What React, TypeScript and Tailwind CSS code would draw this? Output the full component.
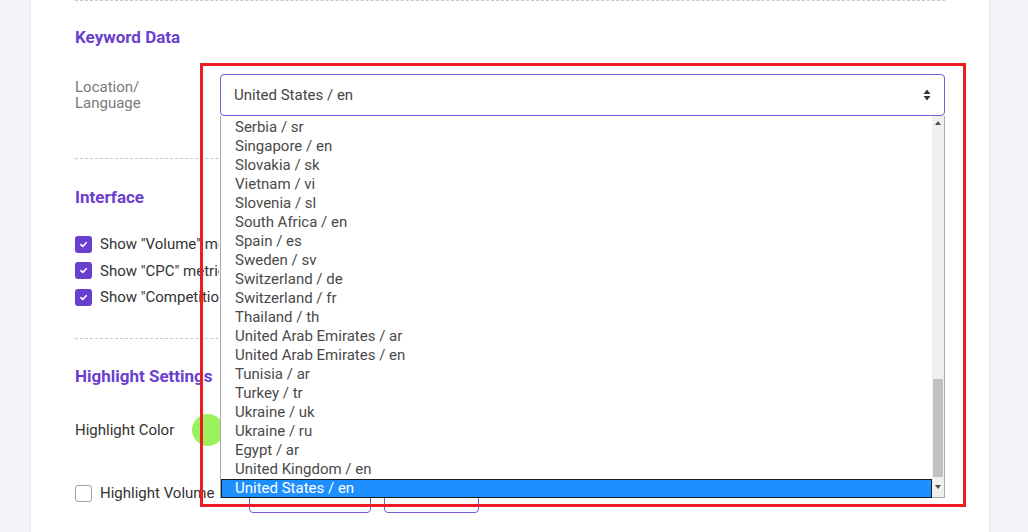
const options = [
  "Serbia / sr",
  "Singapore / en",
  "Slovakia / sk",
  "Vietnam / vi",
  "Slovenia / sl",
  "South Africa / en",
  "Spain / es",
  "Sweden / sv",
  "Switzerland / de",
  "Switzerland / fr",
  "Thailand / th",
  "United Arab Emirates / ar",
  "United Arab Emirates / en",
  "Tunisia / ar",
  "Turkey / tr",
  "Ukraine / uk",
  "Ukraine / ru",
  "Egypt / ar",
  "United Kingdom / en",
  "United States / en",
];

function Check({ checked }: { checked: boolean }) {
  if (!checked) {
    return <span className="h-[17px] w-[17px] shrink-0 rounded-[3px] border-[1.5px] border-[#9aa0a8] bg-white" />;
  }
  return (
    <span className="flex h-[17px] w-[17px] shrink-0 items-center justify-center rounded-[3px] bg-[#6a3fcf]">
      <svg viewBox="0 0 12 12" className="h-[9px] w-[9px]" fill="none" stroke="white" strokeWidth="2.2" strokeLinecap="round" strokeLinejoin="round">
        <path d="M2.5 6.3 5 8.6 9.6 3.6" />
      </svg>
    </span>
  );
}

function Dropdown() {
  return (
    <div className="absolute left-0 right-0 top-full flex h-[382px] border border-t-0 border-[#a9a9a9] bg-white">
      <ul className="flex-1 pt-[2px]">
        {options.map((o, i) =>
          i === options.length - 1 ? (
            <li key={o} className="h-[19px] border border-[#1c1c1c] bg-[#1e8fff] pl-[13px] text-[15px] leading-[17px] text-white">
              {o}
            </li>
          ) : (
            <li key={o} className="h-[19px] pl-[14px] text-[15px] leading-[19px] text-[#4a4a4a]">
              {o}
            </li>
          )
        )}
      </ul>
      <div className="flex w-[12px] flex-col bg-[#f0f0f0]">
        <div className="flex h-[14px] items-center justify-center">
          <svg viewBox="0 0 6 4" className="h-[4px] w-[6px]"><path d="M3 0 6 4H0z" fill="#505050" /></svg>
        </div>
        <div className="flex-1" />
        <div className="mx-[1px] h-[98px] bg-[#c1c1c1]" />
        <div className="flex h-[20px] items-center justify-center">
          <svg viewBox="0 0 6 4" className="h-[4px] w-[6px]"><path d="M0 0h6L3 4z" fill="#505050" /></svg>
        </div>
      </div>
    </div>
  );
}

export default function App() {
  return (
    <div className="relative flex h-[532px] w-[1028px] overflow-hidden bg-[#f4f5f9] pl-[31px] font-['Roboto',sans-serif]">
      <div className="w-[958px] bg-white px-[44px] shadow-[0_0_3px_rgba(0,0,0,0.12)]">
        <div className="border-t border-dashed border-[#c8c8c8]" />

        {/* Keyword data */}
        <h3 className="pt-[24px] text-[17px] font-bold leading-[24px] text-[#6a3fcf]">Keyword Data</h3>
        <div className="mt-[25px] flex">
          <div className="w-[145px] pt-[5px] text-[15px] leading-[16px] text-[#7a7a7a]">
            Location/
            <br />
            Language
          </div>
          <div className="relative flex-1">
            <div className="flex h-[42px] items-center justify-between rounded-[4px] border border-[#7c57d6] px-[13px] text-[15px] text-[#444]">
              <span>United States / en</span>
              <svg viewBox="0 0 8 12" className="h-[12px] w-[8px]">
                <path d="M4 0.5 7.5 5H0.5z M4 11.5 0.5 7h7z" fill="#333" />
              </svg>
            </div>
            <Dropdown />
          </div>
        </div>
        <div className="mt-[42px] border-t border-dashed border-[#c8c8c8]" />

        {/* Interface */}
        <h3 className="pt-[26px] text-[17px] font-bold leading-[24px] text-[#6a3fcf]">Interface</h3>
        <div className="mt-[22px] flex flex-col">
          {['Show "Volume" metric', 'Show "CPC" metric', 'Show "Competition" metric'].map((t) => (
            <label key={t} className="flex h-[26.5px] items-center gap-[8px] text-[15px] text-[#333]">
              <Check checked />
              <span className="w-[119px] overflow-hidden whitespace-nowrap">{t}</span>
            </label>
          ))}
        </div>
        <div className="mt-[27.5px] border-t border-dashed border-[#c8c8c8]" />

        {/* Highlight settings */}
        <h3 className="pt-[25px] text-[17px] font-bold leading-[24px] text-[#6a3fcf]">Highlight Settings</h3>
        <div className="mt-[26px] flex h-[32px] items-center">
          <span className="w-[117px] text-[15px] text-[#333]">Highlight Color</span>
          <span className="h-[32px] w-[32px] rounded-full bg-[#9cf05c]" />
        </div>
        <div className="mt-[27px] flex h-[40px] items-center">
          <label className="flex w-[174px] items-center gap-[8px] text-[15px] text-[#333]">
            <Check checked={false} />
            <span>Highlight Volume</span>
          </label>
          <div className="flex gap-[13px]">
            <button className="h-[40px] w-[122px] rounded-[4px] border border-[#7c57d6] bg-white" />
            <button className="h-[40px] w-[95px] rounded-[4px] border border-[#7c57d6] bg-white" />
          </div>
        </div>
      </div>

      {/* annotation box */}
      <div className="pointer-events-none absolute left-[200px] top-[63px] h-[444px] w-[766px] border-[3px] border-[#ec1c24]" />
    </div>
  );
}
